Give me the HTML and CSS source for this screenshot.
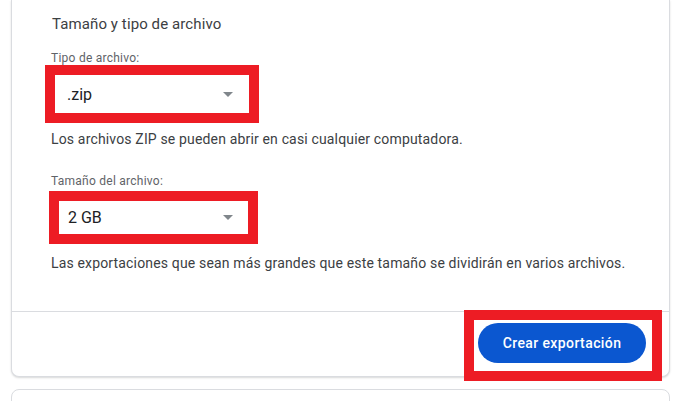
FILE: index.html
```html
<!DOCTYPE html>
<html lang="es">
<head>
    <meta charset="UTF-8">
    <meta name="viewport" content="width=device-width, initial-scale=1.0">
    <title>Crear exportación</title>
    <link rel="stylesheet" href="styles.css">
</head>
<body>
<div class="page">
    <div class="card">
        <div class="section">
            <h2 class="section-title">Tamaño y tipo de archivo</h2>

            <div class="field-label">Tipo de archivo:</div>
            <div class="mark mark-type">
                <div class="select">
                    <span>.zip</span>
                    <span class="arrow"></span>
                </div>
            </div>
            <p class="hint hint-type">Los archivos ZIP se pueden abrir en casi cualquier computadora.</p>

            <div class="field-label label-size">Tamaño del archivo:</div>
            <div class="mark mark-size">
                <div class="select">
                    <span>2 GB</span>
                    <span class="arrow"></span>
                </div>
            </div>
            <p class="hint hint-size">Las exportaciones que sean más grandes que este tamaño se dividirán en varios archivos.</p>
        </div>
        <div class="card-footer">
            <div class="mark mark-button">
                <button class="primary">Crear exportación</button>
            </div>
        </div>
    </div>
    <div class="card card-next"></div>
</div>
</body>
</html>
```

FILE: styles.css
```css
body {
    margin: 0;
    background-color: #fff;
    font-family: Roboto, Arial, sans-serif;
    color: #3c4043;
}
.page {
    padding-left: 11px;
    width: 659px;
}
.card {
    background-color: #fff;
    border: 1px solid #dadce0;
    border-top: none;
    border-radius: 0 0 8px 8px;
    box-shadow: 0 1px 2px rgba(60, 64, 67, 0.2);
}
.card-next {
    margin-top: 12px;
    height: 40px;
    border-top: 1px solid #dadce0;
    border-radius: 8px 8px 0 0;
    box-shadow: none;
}
.section {
    padding: 14px 0 38px 39px;
}
.section-title {
    margin: 0 0 0 1px;
    font-size: 15px;
    font-weight: 400;
    line-height: 20px;
    letter-spacing: 0.1px;
    color: #3c4043;
}
.field-label {
    margin-top: 17px;
    font-size: 12px;
    line-height: 14px;
    letter-spacing: 0.25px;
    color: #5f6368;
}
.label-size {
    margin-top: 25px;
}
.mark {
    border: 10px solid #ed1c24;
    background-color: #fff;
    box-sizing: border-box;
}
.mark-type {
    width: 214px;
    margin-left: -6px;
}
.mark-size {
    width: 209px;
    margin-top: 3px;
    margin-left: -2px;
}
.select {
    display: flex;
    align-items: center;
    justify-content: space-between;
    font-size: 16px;
    color: #202124;
}
.mark-type .select {
    height: 38px;
    padding: 0 16px 0 12px;
}
.mark-size .select {
    height: 33px;
    padding: 0 15px 0 9px;
}
.arrow {
    width: 0;
    height: 0;
    border-left: 5px solid transparent;
    border-right: 5px solid transparent;
    border-top: 5px solid #80868b;
}
.hint {
    margin: 6px 0 0;
    font-size: 14px;
    line-height: 20px;
    letter-spacing: 0.16px;
    color: #3c4043;
}
.hint-size {
    margin-top: 9px;
}
.card-footer {
    display: flex;
    justify-content: flex-end;
    border-top: 1px solid #dadce0;
    padding: 11px 23px 13px;
}
.mark-button {
    padding: 3px 6px 8px 4px;
    margin: -13px -16px -18px -14px;
}
.primary {
    display: block;
    width: 168px;
    height: 40px;
    border: none;
    border-radius: 20px;
    background-color: #0b57d0;
    color: #fff;
    font-family: Roboto, Arial, sans-serif;
    font-size: 14px;
    font-weight: 500;
    letter-spacing: 0.4px;
    cursor: pointer;
}
```
